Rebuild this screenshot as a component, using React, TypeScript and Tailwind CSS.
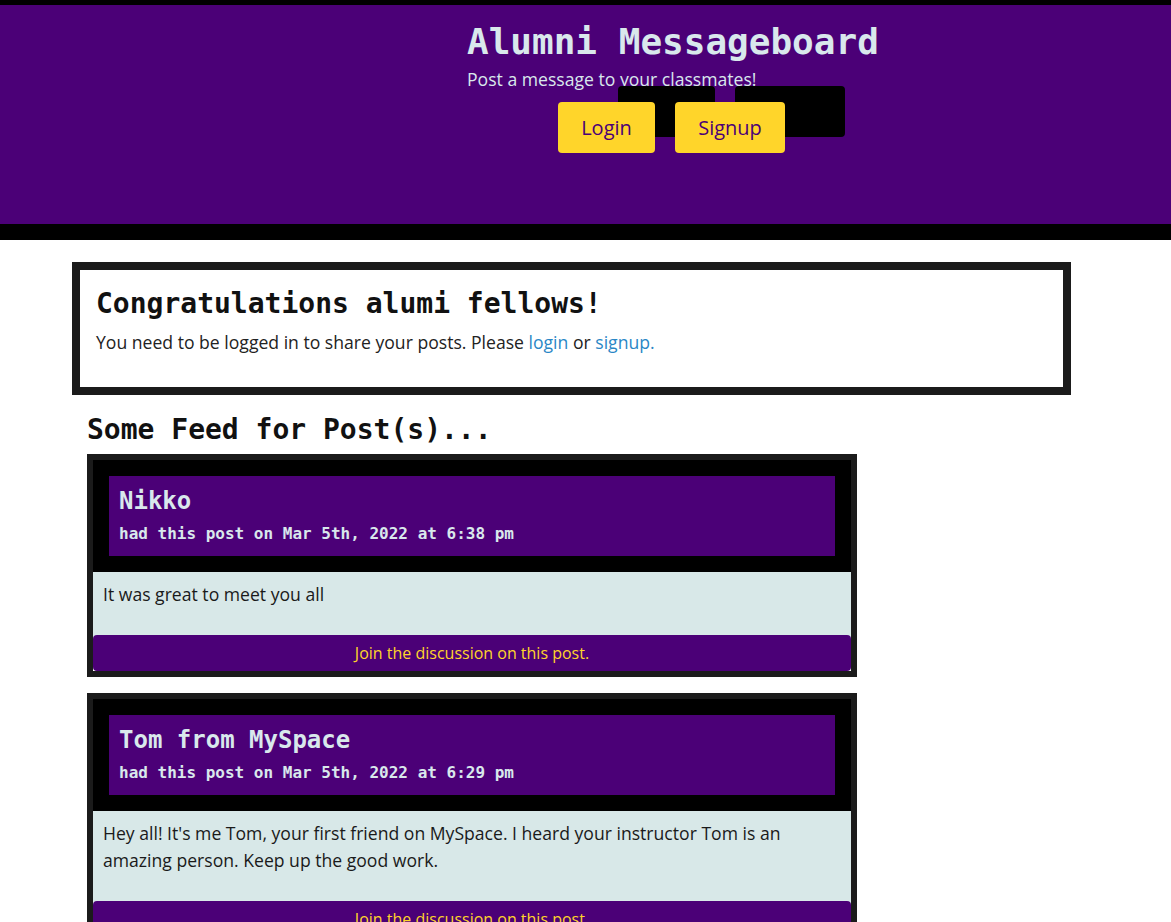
import React from 'react';

// Alumni Messageboard — landing page, logged-out view
const posts = [
  {
    author: 'Nikko',
    date: 'Mar 5th, 2022 at 6:38 pm',
    body: 'It was great to meet you all',
  },
  {
    author: 'Tom from MySpace',
    date: 'Mar 5th, 2022 at 6:29 pm',
    body: "Hey all! It's me Tom, your first friend on MySpace. I heard your instructor Tom is an amazing person. Keep up the good work.",
  },
];

const mono = "font-['DejaVu_Sans_Mono','Liberation_Mono',monospace] font-bold";
const sans = "font-['Open_Sans','Noto_Sans',sans-serif]";

function PostCard({ author, date, body }: { author: string; date: string; body: string }) {
  return (
    <div className="w-[770px] border-[6px] border-[#1b1b1b] bg-white">
      <div className="bg-black p-4">
        <div className="h-[80px] bg-[#4b0077] px-[10px] pt-[11px] text-[#d9e8ec]">
          <h3 className={`${mono} text-[24px] leading-[28px]`}>{author}</h3>
          <p className={`${mono} mt-[9px] text-[16px] leading-[19px]`}>had this post on {date}</p>
        </div>
      </div>
      <div className={`${sans} bg-[#d8e8e8] px-[10px] pt-[9px] pb-[27px] text-[17.6px] leading-[27px] text-[#1a1a1a]`}>
        <p>{body}</p>
      </div>
      <div className="bg-[linear-gradient(#d8e8e8_50%,#ffffff_50%)]">
        <button className={`${sans} block h-[36px] w-full rounded-[4px] bg-[#4b0077] text-center text-[16px] text-[#ffd52a]`}>
          Join the discussion on this post.
        </button>
      </div>
    </div>
  );
}

export default function App() {
  return (
    <div className="min-h-screen bg-white">
      {/* Header */}
      <header className="h-[240px] border-t-[5px] border-b-[16px] border-black bg-[#4b0077]">
        <div className="ml-[467px] w-[409px] pt-[15px]">
          <h1 className={`${mono} text-[36px] leading-[43px] text-[#d9e8ec] whitespace-nowrap`}>Alumni Messageboard</h1>
          <p className={`${sans} mt-[4px] text-[17.6px] leading-[24px] text-[#d9e8ec]`}>Post a message to your classmates!</p>
          <div className="mt-[11px] flex justify-center gap-5">
            <button className={`${sans} h-[51px] w-[97px] rounded-[4px] bg-[#ffd52a] text-[20px] text-[#4b0077] shadow-[60px_-16px_0_0_#000]`}>Login</button>
            <button className={`${sans} h-[51px] w-[110px] rounded-[4px] bg-[#ffd52a] text-[20px] text-[#4b0077] shadow-[60px_-16px_0_0_#000]`}>Signup</button>
          </div>
        </div>
      </header>

      <main className="pl-[72px] pt-[22px] pb-10">
        {/* Welcome card */}
        <section className="h-[133px] w-[999px] border-8 border-[#1b1b1b] bg-white px-4 pt-[17px]">
          <h2 className={`${mono} text-[28px] leading-[33px] text-[#111111]`}>Congratulations alumi fellows!</h2>
          <p className={`${sans} mt-[10px] text-[17.6px] leading-[24px] text-[#222222]`}>
            You need to be logged in to share your posts. Please{' '}
            <a className="text-[#2a87c6]">login</a> or <a className="text-[#2a87c6]">signup.</a>
          </p>
        </section>

        {/* Feed */}
        <section className="pl-[15px]">
          <h2 className={`${mono} mt-[18px] text-[28px] leading-[33px] text-[#111111]`}>Some Feed for Post(s)...</h2>
          <div className="mt-[8px] flex flex-col gap-4">
            {posts.map(p => (
              <PostCard key={p.author} {...p} />
            ))}
          </div>
        </section>
      </main>
    </div>
  );
}
